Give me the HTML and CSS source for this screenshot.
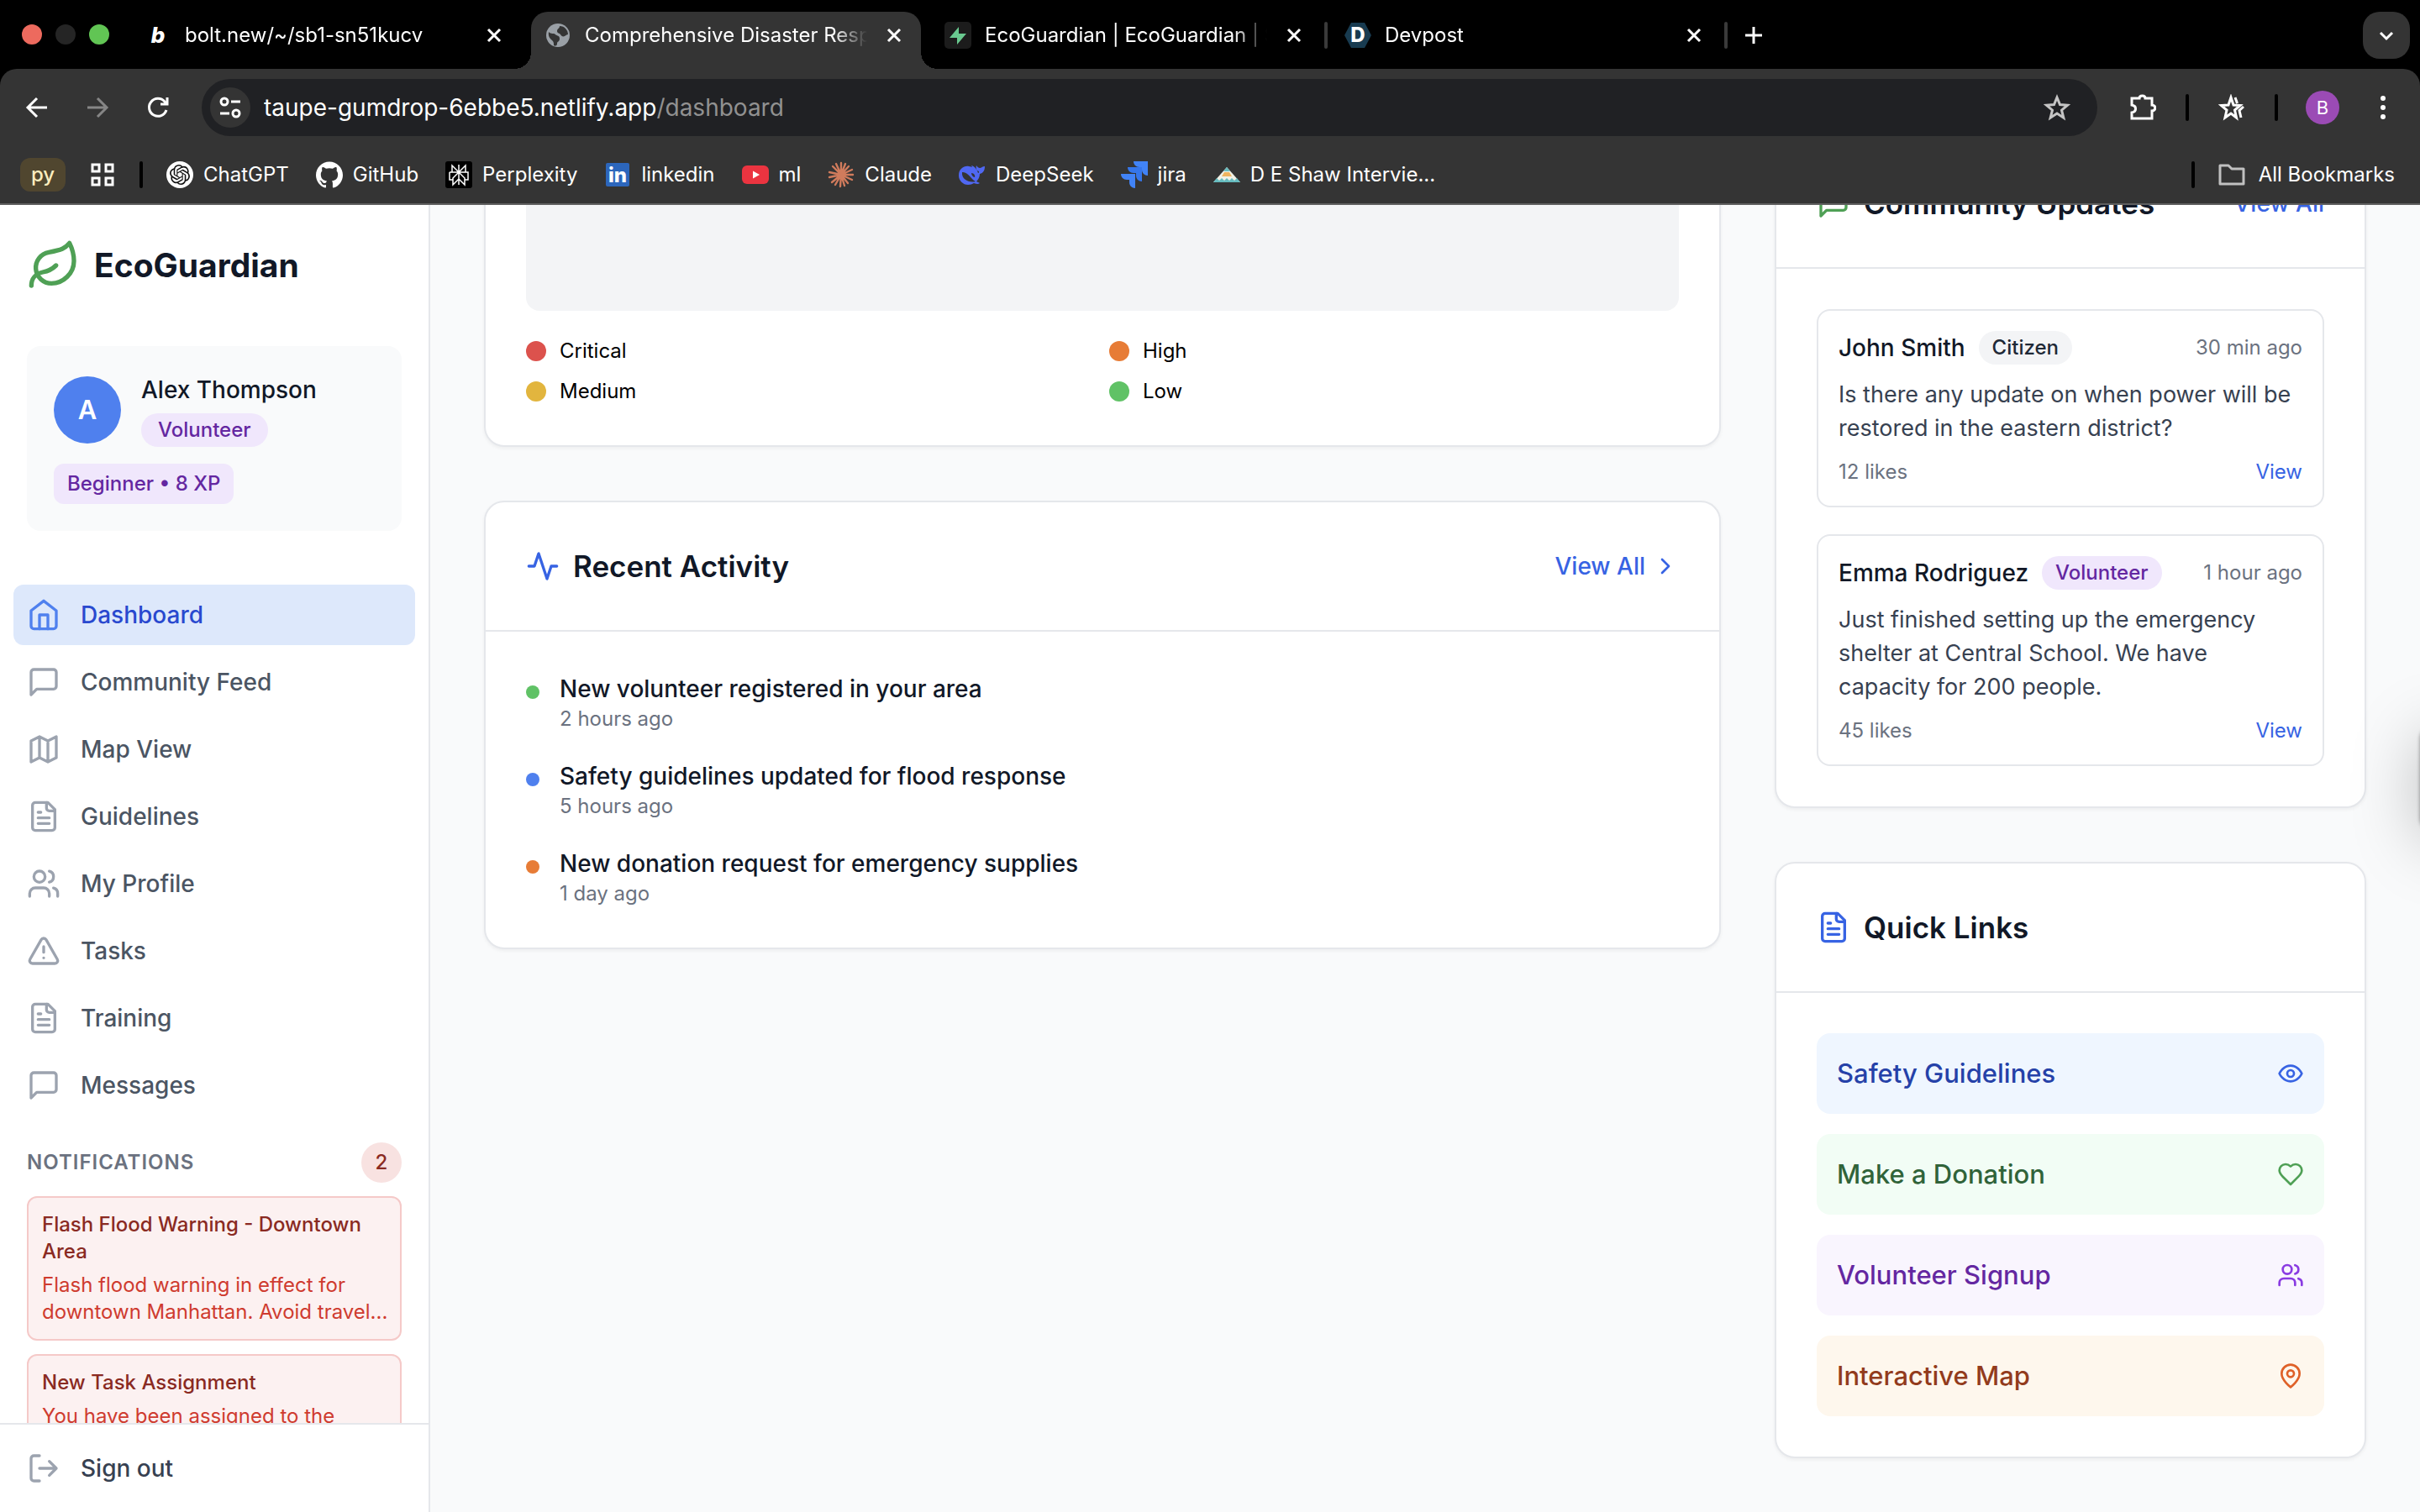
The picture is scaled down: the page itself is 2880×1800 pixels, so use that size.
FILE: index.html
```html
<!DOCTYPE html>
<html lang="en">
<head>
    <meta charset="UTF-8">
    <meta name="viewport" content="width=device-width, initial-scale=1.0">
    <title>Comprehensive Disaster Response</title>
    <link rel="stylesheet" href="styles.css">
</head>
<body>

    <!-- Shared icons -->
    <svg class="sprite" aria-hidden="true">
        <symbol id="leaf" viewBox="0 0 24 24"><path d="M11 20A7 7 0 0 1 9.8 6.1C15.5 5 17 4.48 19 2c1 2 2 4.18 2 8 0 5.5-4.78 10-10 10Z"/><path d="M2 21c0-3 1.85-5.36 5.08-6C9.5 14.52 12 13 13 12"/></symbol>
        <symbol id="home" viewBox="0 0 24 24"><path d="m3 9 9-7 9 7v11a2 2 0 0 1-2 2H5a2 2 0 0 1-2-2z"/><path d="M9 22V12h6v10"/></symbol>
        <symbol id="message" viewBox="0 0 24 24"><path d="M21 15a2 2 0 0 1-2 2H7l-4 4V5a2 2 0 0 1 2-2h14a2 2 0 0 1 2 2z"/></symbol>
        <symbol id="map" viewBox="0 0 24 24"><path d="m3 6 6-3 6 3 6-3v15l-6 3-6-3-6 3zM9 3v15M15 6v15"/></symbol>
        <symbol id="file" viewBox="0 0 24 24"><path d="M15 2H6a2 2 0 0 0-2 2v16a2 2 0 0 0 2 2h12a2 2 0 0 0 2-2V7Z"/><path d="M14 2v4a2 2 0 0 0 2 2h4M10 9H8M16 13H8M16 17H8"/></symbol>
        <symbol id="users" viewBox="0 0 24 24"><path d="M16 21v-2a4 4 0 0 0-4-4H6a4 4 0 0 0-4 4v2"/><circle cx="9" cy="7" r="4"/><path d="M22 21v-2a4 4 0 0 0-3-3.87M16 3.13a4 4 0 0 1 0 7.75"/></symbol>
        <symbol id="alert" viewBox="0 0 24 24"><path d="m21.73 18-8-14a2 2 0 0 0-3.48 0l-8 14A2 2 0 0 0 4 21h16a2 2 0 0 0 1.73-3ZM12 9v4M12 17h.01"/></symbol>
        <symbol id="logout" viewBox="0 0 24 24"><path d="M9 21H5a2 2 0 0 1-2-2V5a2 2 0 0 1 2-2h4M16 17l5-5-5-5M21 12H9"/></symbol>
        <symbol id="activity" viewBox="0 0 24 24"><path d="M22 12h-4l-3 9L9 3l-3 9H2"/></symbol>
        <symbol id="chevron" viewBox="0 0 24 24"><path d="m9 18 6-6-6-6"/></symbol>
        <symbol id="eye" viewBox="0 0 24 24"><path d="M2 12s3-7 10-7 10 7 10 7-3 7-10 7-10-7-10-7Z"/><circle cx="12" cy="12" r="3"/></symbol>
        <symbol id="heart" viewBox="0 0 24 24"><path d="M19 14c1.49-1.46 3-3.21 3-5.5A5.5 5.5 0 0 0 16.5 3c-1.76 0-3 .5-4.5 2-1.5-1.5-2.74-2-4.5-2A5.5 5.5 0 0 0 2 8.5c0 2.3 1.5 4.05 3 5.5l7 7Z"/></symbol>
        <symbol id="pin" viewBox="0 0 24 24"><path d="M20 10c0 6-8 12-8 12s-8-6-8-12a8 8 0 0 1 16 0Z"/><circle cx="12" cy="10" r="3"/></symbol>
        <symbol id="close" viewBox="0 0 32 32"><path d="M9 9l14 14M23 9L9 23"/></symbol>
    </svg>

    <header class="browser">
        <div class="tab-strip">
            <div class="window-buttons">
                <span class="light red"></span>
                <span class="light dark"></span>
                <span class="light green"></span>
            </div>
            <div class="tab">
                <span class="favicon bolt">b</span>
                <span class="tab-title">bolt.new/~/sb1-sn51kucv</span>
                <button class="tab-close" aria-label="Close tab"><svg><use href="#close"/></svg></button>
            </div>
            <div class="tab active">
                <svg class="favicon" viewBox="0 0 32 32"><circle cx="16" cy="16" r="14" fill="#9aa0a6"/><path d="M5 12c3 3 6 1 8 3s5 1 5 5-3 3-3 6-3 3-4 2c0-3 0-4-2-6s-5-4-4-10zM18 5c0 3-3 3-3 6s3 2 4 4 3 3 5 2 2-2 4-2C28 10 24 5 18 5z" fill="#343434"/></svg>
                <span class="tab-title">Comprehensive Disaster Resp</span>
                <button class="tab-close" aria-label="Close tab"><svg><use href="#close"/></svg></button>
            </div>
            <div class="tab divided">
                <svg class="favicon" viewBox="0 0 32 32"><rect width="32" height="32" rx="5" fill="#1c1c1c"/><path d="M17 6v8h9L15 27v-8H6z" fill="#69c98f"/></svg>
                <span class="tab-title">EcoGuardian | EcoGuardian | S</span>
                <button class="tab-close" aria-label="Close tab"><svg><use href="#close"/></svg></button>
            </div>
            <div class="tab divided">
                <svg class="favicon" viewBox="0 0 32 32"><path d="M8 1h16l8 15-8 15H8L0 16z" fill="#183b50"/><text x="16" y="24" text-anchor="middle" class="devpost">D</text></svg>
                <span class="tab-title">Devpost</span>
                <button class="tab-close" aria-label="Close tab"><svg><use href="#close"/></svg></button>
            </div>
            <button class="new-tab" aria-label="New tab"><svg viewBox="0 0 32 32"><path d="M16 6v20M6 16h20"/></svg></button>
            <button class="tab-search" aria-label="Search tabs"><svg viewBox="0 0 32 32"><path d="M9 13l7 7 7-7"/></svg></button>
        </div>

        <div class="toolbar">
            <button class="tool" aria-label="Back"><svg viewBox="0 0 32 32"><path d="M28 16H6M16 5L5 16l11 11"/></svg></button>
            <button class="tool dim" aria-label="Forward"><svg viewBox="0 0 32 32"><path d="M4 16h22M16 5l11 11-11 11"/></svg></button>
            <button class="tool" aria-label="Reload"><svg viewBox="0 0 32 32"><path d="M26 19a10.500 10.500 0 1 1-2-10l3 3M27 4v8h-8"/></svg></button>
            <div class="omnibox">
                <button class="site-info" aria-label="Site information"><svg viewBox="0 0 32 32"><circle cx="9" cy="9" r="4"/><path d="M17 9h11M4 23h11"/><circle cx="23" cy="23" r="4"/></svg></button>
                <input class="url" type="text" aria-label="Address" value="taupe-gumdrop-6ebbe5.netlify.app"><span class="url-path">/dashboard</span>
                <button class="bookmark-star" aria-label="Bookmark this page"><svg viewBox="0 0 32 32"><path d="M16 4l3.500 8.500 9 .7-7 6 2.300 9L16 23l-7.800 5.200 2.300-9-7-6 9-.7z"/></svg></button>
            </div>
            <button class="tool" aria-label="Extensions"><svg viewBox="0 0 32 32"><path d="M5 5h7c0-4 7-4 7 0h8v8c5 0 5 7 0 7v9H3v-7c6-1 6-8 0-9V5z"/></svg></button>
            <span class="bar-divider"></span>
            <button class="tool" aria-label="Favourites"><svg viewBox="0 0 32 32"><path d="M15 4l3 9 8 .5-6.500 5.500 2 9-6.500-5-7 5 2-9-6.500-5.500 8.500-.5zM20 4l2.500 7M30 15l-5 4.500 2 8.500"/></svg></button>
            <span class="bar-divider"></span>
            <button class="account" aria-label="Account">B</button>
            <button class="tool menu" aria-label="Menu"><svg viewBox="0 0 32 32"><circle cx="16" cy="5" r="3"/><circle cx="16" cy="16" r="3"/><circle cx="16" cy="27" r="3"/></svg></button>
        </div>

        <nav class="bookmarks" aria-label="Bookmarks">
            <a class="group-chip" href="#">py</a>
            <button class="apps" aria-label="Apps"><svg viewBox="0 0 28 28"><path d="M2 2h8v8H2zM18 2h8v8h-8zM2 18h8v8H2zM18 18h8v8h-8z"/></svg></button>
            <span class="bar-divider"></span>
            <a class="bookmark" href="#"><svg viewBox="0 0 32 32"><circle cx="16" cy="16" r="16" fill="#fff"/><path transform="translate(4 4)" fill="#111" d="M22.2819 9.8211a5.9847 5.9847 0 0 0-.5157-4.9108 6.0462 6.0462 0 0 0-6.5098-2.9A6.0651 6.0651 0 0 0 4.9807 4.1818a5.9847 5.9847 0 0 0-3.9977 2.9 6.0462 6.0462 0 0 0 .7427 7.0966 5.98 5.98 0 0 0 .511 4.9107 6.051 6.051 0 0 0 6.5146 2.9001A5.9847 5.9847 0 0 0 13.2599 24a6.0557 6.0557 0 0 0 5.7718-4.2058 5.9894 5.9894 0 0 0 3.9977-2.9001 6.0557 6.0557 0 0 0-.7475-7.0729zm-9.022 12.6081a4.4755 4.4755 0 0 1-2.8764-1.0408l.1419-.0804 4.7783-2.7582a.7948.7948 0 0 0 .3927-.6813v-6.7369l2.02 1.1686a.071.071 0 0 1 .038.052v5.5826a4.504 4.504 0 0 1-4.4945 4.4944zm-9.6607-4.1254a4.4708 4.4708 0 0 1-.5346-3.0137l.142.0852 4.783 2.7582a.7712.7712 0 0 0 .7806 0l5.8428-3.3685v2.3324a.0804.0804 0 0 1-.0332.0615L9.74 19.9502a4.4992 4.4992 0 0 1-6.1408-1.6464zM2.3408 7.8956a4.485 4.485 0 0 1 2.3655-1.9728V11.6a.7664.7664 0 0 0 .3879.6765l5.8144 3.3543-2.0201 1.1685a.0757.0757 0 0 1-.071 0l-4.8303-2.7865A4.504 4.504 0 0 1 2.3408 7.872zm16.5963 3.8558L13.1038 8.364 15.1192 7.2a.0757.0757 0 0 1 .071 0l4.8303 2.7913a4.4944 4.4944 0 0 1-.6765 8.1042v-5.6772a.79.79 0 0 0-.407-.667zm2.0107-3.0231l-.142-.0852-4.7735-2.7818a.7759.7759 0 0 0-.7854 0L9.409 9.2297V6.8974a.0662.0662 0 0 1 .0284-.0615l4.8303-2.7866a4.4992 4.4992 0 0 1 6.6802 4.66zM8.3065 12.863l-2.02-1.1638a.0804.0804 0 0 1-.038-.0567V6.0742a4.4992 4.4992 0 0 1 7.3757-3.4537l-.142.0805L8.704 5.459a.7948.7948 0 0 0-.3927.6813zm1.0976-2.3654l2.602-1.4998 2.6069 1.4998v2.9994l-2.5974 1.4997-2.6067-1.4997Z"/></svg>ChatGPT</a>
            <a class="bookmark" href="#"><svg viewBox="0 0 24 24"><path fill="#fff" d="M12 .297c-6.63 0-12 5.373-12 12 0 5.303 3.438 9.8 8.205 11.385.6.113.82-.258.82-.577 0-.285-.01-1.04-.015-2.04-3.338.724-4.042-1.61-4.042-1.61C4.422 18.07 3.633 17.7 3.633 17.7c-1.087-.744.084-.729.084-.729 1.205.084 1.838 1.236 1.838 1.236 1.07 1.835 2.809 1.305 3.495.998.108-.776.417-1.305.76-1.605-2.665-.3-5.466-1.332-5.466-5.93 0-1.31.465-2.38 1.235-3.22-.135-.303-.54-1.523.105-3.176 0 0 1.005-.322 3.3 1.23.96-.267 1.98-.399 3-.405 1.02.006 2.04.138 3 .405 2.28-1.552 3.285-1.23 3.285-1.23.645 1.653.24 2.873.12 3.176.765.84 1.23 1.91 1.23 3.22 0 4.61-2.805 5.625-5.475 5.92.42.36.81 1.096.81 2.22 0 1.606-.015 2.896-.015 3.286 0 .315.21.69.825.57C20.565 22.092 24 17.592 24 12.297c0-6.627-5.373-12-12-12"/></svg>GitHub</a>
            <a class="bookmark" href="#"><svg viewBox="0 0 32 32"><rect width="32" height="32" rx="3" fill="#000"/><path d="M16 4v24M8 5l8 8 8-8v8H8zM5 13h22v9h-4M5 13v9h4M16 13l-7 7v8l7-7 7 7v-8z" fill="none" stroke="#fff" stroke-width="1.500"/></svg>Perplexity</a>
            <a class="bookmark" href="#"><svg viewBox="0 0 32 32"><rect x="2" y="2" width="28" height="28" rx="2" fill="#2c66bc"/><text x="16" y="25" text-anchor="middle" class="linkedin">in</text></svg>linkedin</a>
            <a class="bookmark" href="#"><svg viewBox="0 0 32 32"><rect y="5" width="32" height="22" rx="6" fill="#eb3440"/><path d="M13 11.500v9l8-4.500z" fill="#fff"/></svg>ml</a>
            <a class="bookmark" href="#"><svg viewBox="0 0 32 32"><path d="M16 16V2M16 16l5-13M16 16l9-10M16 16l13-6M16 16h14M16 16l13 6M16 16l8 10M16 16l4 13M16 16l-1 14M16 16L9 28M16 16L5 25M16 16l-14 3M16 16L2 13M16 16L6 6M16 16L10 3" stroke="#d07b5c" stroke-width="2.400" stroke-linecap="round"/></svg>Claude</a>
            <a class="bookmark" href="#"><svg viewBox="0 0 32 32"><path d="M0 17C0 9 6 5 12 6c2 0 3 1 4 1l-1-2c4 1 7 5 8 9 1 0 1-1 1-2-3-1-4-4-3-7 1 2 3 3 4 3 2 0 3-2 6-2 0 5-2 8-6 9 0 4-2 7-4 9 1 1 3 1 4 2-3 2-6 0-7 0-2 1-4 2-7 2C5 28 0 23 0 17z" fill="#5068f2"/><path d="M4 13c7-1 11 9 16 11-7 2-17-2-16-11zM15 14c3 0 5 3 4 5-2 0-4-3-4-5z" fill="#343434"/></svg>DeepSeek</a>
            <a class="bookmark" href="#"><svg viewBox="0 0 32 32"><path d="M15 0h17v17c-4 0-7-3-7-7V7h-3c-4 0-7-3-7-7z" fill="#4183f6"/><path d="M8 7h17v17c-4 0-7-3-7-7v-3h-3c-4 0-7-3-7-7z" fill="#3576ea"/><path d="M0 15h17v17c-4 0-7-3-7-7v-3H7c-4 0-7-3-7-7z" fill="#4183f6"/></svg>jira</a>
            <a class="bookmark" href="#"><svg viewBox="0 0 32 32"><path d="M16 7l16 18H0z" fill="#f1f1e6"/><path d="M16 7l4 5h-8z" fill="#67bcc0"/><path d="M0 25l4-5 3 3 3-3 3 3 3-3 3 3 3-3 3 3 3-3 4 5z" fill="#67bcc0"/><path d="M13 13h6l3 5H10z" fill="#efb35e"/></svg>D E Shaw Intervie...</a>
            <span class="bar-divider push"></span>
            <a class="bookmark all" href="#"><svg viewBox="0 0 32 32"><path d="M2 5h10l4 4h14v18H2z" fill="none" stroke="#c0c0c0" stroke-width="3" stroke-linejoin="round"/></svg>All Bookmarks</a>
        </nav>
    </header>

    <div class="page">
        <aside class="sidebar">
            <div class="sidebar-scroll">
                <div class="brand">
                    <svg class="icon brand-icon"><use href="#leaf"/></svg>
                    <span>EcoGuardian</span>
                </div>

                <div class="profile">
                    <div class="profile-row">
                        <span class="avatar">A</span>
                        <div>
                            <p class="profile-name">Alex Thompson</p>
                            <span class="pill purple">Volunteer</span>
                        </div>
                    </div>
                    <span class="level">Beginner • 8 XP</span>
                </div>

                <nav class="menu-list" aria-label="Main">
                    <a class="menu-item current" href="#"><svg class="icon"><use href="#home"/></svg>Dashboard</a>
                    <a class="menu-item" href="#"><svg class="icon"><use href="#message"/></svg>Community Feed</a>
                    <a class="menu-item" href="#"><svg class="icon"><use href="#map"/></svg>Map View</a>
                    <a class="menu-item" href="#"><svg class="icon"><use href="#file"/></svg>Guidelines</a>
                    <a class="menu-item" href="#"><svg class="icon"><use href="#users"/></svg>My Profile</a>
                    <a class="menu-item" href="#"><svg class="icon"><use href="#alert"/></svg>Tasks</a>
                    <a class="menu-item" href="#"><svg class="icon"><use href="#file"/></svg>Training</a>
                    <a class="menu-item" href="#"><svg class="icon"><use href="#message"/></svg>Messages</a>
                </nav>

                <section class="notifications">
                    <div class="notifications-head">
                        <h3>NOTIFICATIONS</h3>
                        <span class="count">2</span>
                    </div>
                    <article class="notice">
                        <h4>Flash Flood Warning - Downtown Area</h4>
                        <p>Flash flood warning in effect for downtown Manhattan. Avoid travel...</p>
                    </article>
                    <article class="notice">
                        <h4>New Task Assignment</h4>
                        <p>You have been assigned to the</p>
                    </article>
                </section>
            </div>

            <div class="sidebar-footer">
                <button class="sign-out"><svg class="icon"><use href="#logout"/></svg>Sign out</button>
            </div>
        </aside>

        <main class="content">
            <div class="column">
                <section class="card">
                    <div class="card-body">
                        <div class="map-area"></div>
                        <ul class="legend">
                            <li><span class="dot red"></span>Critical</li>
                            <li><span class="dot orange"></span>High</li>
                            <li><span class="dot yellow"></span>Medium</li>
                            <li><span class="dot green"></span>Low</li>
                        </ul>
                    </div>
                </section>

                <section class="card">
                    <div class="card-head">
                        <svg class="icon blue"><use href="#activity"/></svg>
                        <h2>Recent Activity</h2>
                        <a class="view-all" href="#">View All<svg class="icon small"><use href="#chevron"/></svg></a>
                    </div>
                    <ul class="card-body activities">
                        <li>
                            <span class="dot small green"></span>
                            <div><p>New volunteer registered in your area</p><time>2 hours ago</time></div>
                        </li>
                        <li>
                            <span class="dot small blue"></span>
                            <div><p>Safety guidelines updated for flood response</p><time>5 hours ago</time></div>
                        </li>
                        <li>
                            <span class="dot small orange"></span>
                            <div><p>New donation request for emergency supplies</p><time>1 day ago</time></div>
                        </li>
                    </ul>
                </section>
            </div>

            <div class="column">
                <section class="card">
                    <div class="card-head">
                        <svg class="icon green"><use href="#message"/></svg>
                        <h2>Community Updates</h2>
                        <a class="view-all" href="#">View All</a>
                    </div>
                    <div class="card-body posts">
                        <article class="post">
                            <div class="post-head">
                                <h3>John Smith</h3>
                                <span class="pill gray">Citizen</span>
                                <time>30 min ago</time>
                            </div>
                            <p>Is there any update on when power will be restored in the eastern district?</p>
                            <div class="post-foot"><span>12 likes</span><a href="#">View</a></div>
                        </article>
                        <article class="post">
                            <div class="post-head">
                                <h3>Emma Rodriguez</h3>
                                <span class="pill purple">Volunteer</span>
                                <time>1 hour ago</time>
                            </div>
                            <p>Just finished setting up the emergency shelter at Central School. We have capacity for 200 people.</p>
                            <div class="post-foot"><span>45 likes</span><a href="#">View</a></div>
                        </article>
                    </div>
                </section>

                <section class="card">
                    <div class="card-head">
                        <svg class="icon blue"><use href="#file"/></svg>
                        <h2>Quick Links</h2>
                    </div>
                    <div class="card-body links">
                        <a class="quick safety" href="#">Safety Guidelines<svg class="icon small"><use href="#eye"/></svg></a>
                        <a class="quick donate" href="#">Make a Donation<svg class="icon small"><use href="#heart"/></svg></a>
                        <a class="quick signup" href="#">Volunteer Signup<svg class="icon small"><use href="#users"/></svg></a>
                        <a class="quick mapping" href="#">Interactive Map<svg class="icon small"><use href="#pin"/></svg></a>
                    </div>
                </section>
            </div>
        </main>
        <div class="edge-panel"></div>
    </div>

</body>
</html>
```

FILE: styles.css
```css
* {
    box-sizing: border-box;
}

body {
    margin: 0;
    height: 100vh;
    display: flex;
    flex-direction: column;
    overflow: hidden;
    font-family: Inter, "Liberation Sans", sans-serif;
    font-size: 28px;
    line-height: 40px;
    color: #111827;
    background: #f9fafb;
}

h2, h3, h4, p, ul {
    margin: 0;
    padding: 0;
}

ul {
    list-style: none;
}

a {
    text-decoration: none;
}

button {
    padding: 0;
    border: none;
    background: none;
    font: inherit;
    color: inherit;
    cursor: pointer;
}

.sprite {
    display: none;
}

/* Browser window */
.browser {
    flex: none;
    background: #000;
    color: #fff;
    font-size: 24px;
    line-height: 32px;
}

.browser svg {
    flex: none;
    display: block;
    width: 32px;
    height: 32px;
}

.browser button svg {
    fill: none;
    stroke: currentColor;
    stroke-width: 3;
}

.tab-strip {
    display: flex;
    height: 82px;
    padding: 14px 12px 0 26px;
}

.window-buttons {
    display: flex;
    gap: 16px;
    width: 130px;
    padding-top: 15px;
}

.light {
    width: 24px;
    height: 24px;
    border-radius: 50%;
}

.light.red {
    background: #ed6a5e;
}

.light.dark {
    background: #252525;
}

.light.green {
    background: #61c554;
}

.tab {
    position: relative;
    display: flex;
    align-items: center;
    gap: 16px;
    width: 476px;
    padding: 0 28px 12px 16px;
}

.tab.active {
    width: 464px;
    margin-right: 12px;
    padding-right: 16px;
    background: #343434;
    border-radius: 20px 20px 0 0;
}

.tab.active::before,
.tab.active::after {
    content: "";
    position: absolute;
    bottom: 0;
    width: 20px;
    height: 20px;
}

.tab.active::before {
    right: 100%;
    background: radial-gradient(circle at 0 0, #000 20px, #343434 20px);
}

.tab.active::after {
    left: 100%;
    background: radial-gradient(circle at 100% 0, #000 20px, #343434 20px);
}

.tab.divided::after {
    content: "";
    position: absolute;
    right: 4px;
    top: 12px;
    width: 4px;
    height: 32px;
    border-radius: 2px;
    background: #3a3a3a;
}

.favicon {
    flex: none;
    width: 32px;
    height: 32px;
}

.favicon.bolt {
    font-size: 26px;
    font-weight: 800;
    font-style: italic;
    text-align: center;
}

.devpost {
    font-size: 24px;
    font-weight: 800;
    fill: #fff;
}

.linkedin {
    font-size: 24px;
    font-weight: 800;
    fill: #fff;
}

.tab-title {
    flex: 1;
    overflow: hidden;
    white-space: nowrap;
    -webkit-mask-image: linear-gradient(90deg, #000 88%, transparent);
    mask-image: linear-gradient(90deg, #000 88%, transparent);
}

.new-tab {
    width: 54px;
    padding: 0 0 12px 11px;
}

.tab-search {
    display: flex;
    align-items: center;
    justify-content: center;
    width: 56px;
    height: 56px;
    margin-left: auto;
    border-radius: 20px;
    background: #343434;
}

.toolbar {
    display: flex;
    align-items: center;
    gap: 16px;
    height: 92px;
    padding: 0 16px;
    border-radius: 20px 20px 0 0;
    background: #343434;
}

.tool {
    display: flex;
    align-items: center;
    justify-content: center;
    width: 56px;
    height: 56px;
}

.tool.dim {
    color: #868686;
}

.tool.menu svg {
    fill: #fff;
    stroke: none;
}

.omnibox {
    flex: 1;
    display: flex;
    align-items: center;
    height: 68px;
    margin: 0 10px 0 8px;
    padding: 0 32px 0 10px;
    border-radius: 34px;
    background: #202124;
    font-size: 28px;
}

.site-info {
    display: flex;
    align-items: center;
    justify-content: center;
    width: 48px;
    height: 48px;
    margin-right: 16px;
    border-radius: 50%;
    background: #343434;
}

.url {
    field-sizing: content;
    padding: 0;
    border: none;
    outline: none;
    background: none;
    font: inherit;
    color: #fff;
}

.url-path {
    color: #919191;
}

.bookmark-star {
    margin-left: auto;
    color: #c4c4c4;
}

.bar-divider {
    width: 4px;
    height: 32px;
    border-radius: 2px;
    background: #000;
}

.toolbar .bar-divider {
    margin: 0 7px;
}

.account {
    width: 40px;
    height: 40px;
    margin: 0 8px 0 10px;
    border-radius: 50%;
    background: #9b4bb5;
    font-size: 22px;
}

.bookmarks {
    display: flex;
    align-items: center;
    height: 70px;
    padding: 0 30px 0 24px;
    border-bottom: 2px solid #5f5f5f;
    background: #343434;
}

.bookmark {
    display: flex;
    align-items: center;
    gap: 12px;
    margin-left: 32px;
    color: #fff;
}

.bar-divider + .bookmark {
    margin-left: 28px;
}

.bookmark.all {
    gap: 16px;
}

.group-chip {
    min-width: 54px;
    padding: 4px 0;
    border-radius: 12px;
    background: #50462f;
    color: #fbedbe;
    font-weight: 500;
    text-align: center;
}

.bookmarks .apps svg {
    width: 28px;
    height: 28px;
}

.apps {
    margin: 0 30px;
}

.push {
    margin-left: auto;
}

/* Dashboard */
.page {
    position: relative;
    flex: 1;
    display: flex;
    min-height: 0;
    overflow: hidden;
}

.icon {
    flex: none;
    width: 40px;
    height: 40px;
    fill: none;
    stroke: currentColor;
    stroke-width: 2;
    stroke-linecap: round;
    stroke-linejoin: round;
}

.icon.small {
    width: 32px;
    height: 32px;
}

.icon.blue {
    color: #3763e3;
}

.icon.green {
    color: #4fa055;
}

.sidebar {
    flex: none;
    display: flex;
    flex-direction: column;
    width: 512px;
    background: #fff;
    border-right: 2px solid #e5e7eb;
}

.sidebar-scroll {
    flex: 1;
    min-height: 0;
    overflow: hidden;
    padding-top: 40px;
}

.brand {
    display: flex;
    align-items: center;
    gap: 16px;
    padding: 0 32px;
    font-size: 39px;
    font-weight: 700;
}

.brand-icon {
    width: 64px;
    height: 64px;
    color: #4fa055;
}

.profile {
    margin: 64px 32px;
    padding: 32px;
    border-radius: 16px;
    background: #f9fafb;
}

.profile-row {
    display: flex;
    align-items: center;
    gap: 24px;
    margin-bottom: 20px;
}

.profile-name {
    margin-bottom: 8px;
    font-weight: 500;
}

.avatar {
    display: flex;
    align-items: center;
    justify-content: center;
    width: 80px;
    height: 80px;
    border-radius: 50%;
    background: #4f80ee;
    color: #fff;
    font-size: 31px;
    font-weight: 600;
}

.pill {
    display: block;
    width: fit-content;
    padding: 4px 16px;
    border-radius: 20px;
    font-size: 24px;
    font-weight: 500;
    line-height: 32px;
}

.profile .pill {
    padding: 4px 20px;
}

.pill.purple,
.level {
    background: #f0e7fc;
    color: #6427a1;
}

.pill.gray {
    background: #f3f4f6;
    color: #1f2937;
}

.level {
    display: block;
    width: fit-content;
    padding: 8px 16px;
    border-radius: 12px;
    font-size: 24px;
    font-weight: 500;
    line-height: 32px;
}

.menu-list {
    display: flex;
    flex-direction: column;
    gap: 8px;
    padding: 0 16px;
}

.menu-item,
.sign-out {
    display: flex;
    align-items: center;
    gap: 24px;
    padding: 16px;
    border-radius: 12px;
    font-weight: 500;
    color: #4b5563;
}

.menu-item .icon,
.sign-out .icon {
    color: #9ca3af;
}

.menu-item.current {
    background: #dde8fb;
    color: #2949cf;
}

.menu-item.current .icon {
    color: #4f80ee;
}

.notifications {
    display: flex;
    flex-direction: column;
    gap: 16px;
    padding: 32px;
    font-size: 24px;
    line-height: 32px;
}

.notifications-head {
    display: flex;
    align-items: center;
    justify-content: space-between;
}

.notifications-head h3 {
    font-size: 24px;
    font-weight: 600;
    letter-spacing: 1px;
    color: #6b7280;
}

.count {
    width: 48px;
    border-radius: 50%;
    background: #f8e2e1;
    color: #8a2a22;
    font-weight: 500;
    line-height: 48px;
    text-align: center;
}

.notice {
    padding: 16px 8px 16px 16px;
    border: 2px solid #f5c9c8;
    border-radius: 12px;
    background: #fcf1f1;
    color: #cf3b2f;
}

.notice h4 {
    margin-bottom: 8px;
    font-size: 24px;
    font-weight: 500;
    color: #8a2a22;
}

.sidebar-footer {
    padding: 16px;
    border-top: 2px solid #e5e7eb;
}

.sign-out {
    color: #374151;
}

.content {
    flex: 1;
    display: grid;
    grid-template-columns: minmax(0, 1472fr) minmax(0, 704fr);
    align-items: start;
    gap: 64px;
    /* page is scrolled part of the way down */
    margin-top: -80px;
    padding: 0 64px;
}

.column {
    display: flex;
    flex-direction: column;
    gap: 64px;
}

.card {
    border: 2px solid #e5e7eb;
    border-radius: 24px;
    background: #fff;
    box-shadow: 0 2px 4px rgba(0, 0, 0, 0.05);
}

.card-head {
    display: flex;
    align-items: center;
    gap: 16px;
    height: 154px;
    padding: 0 48px;
    border-bottom: 2px solid #e5e7eb;
}

.card-head h2 {
    font-size: 35px;
    font-weight: 600;
}

.card-body {
    padding: 48px;
}

.view-all {
    display: flex;
    align-items: center;
    gap: 8px;
    margin-left: auto;
    font-weight: 500;
    color: #3763e3;
}

.map-area {
    height: 156px;
    border-radius: 16px;
    background: #f3f4f6;
}

.legend {
    display: grid;
    grid-template-columns: 1fr 1fr;
    gap: 16px;
    margin-top: 32px;
    font-size: 24px;
    line-height: 32px;
    color: #000;
}

.legend li {
    display: flex;
    align-items: center;
    gap: 16px;
}

.dot {
    flex: none;
    width: 24px;
    height: 24px;
    border-radius: 50%;
}

.dot.small {
    width: 16px;
    height: 16px;
    margin-top: 16px;
}

.dot.red {
    background: #dc524d;
}

.dot.orange {
    background: #e77c36;
}

.dot.yellow {
    background: #e2b53e;
}

.dot.green {
    background: #60c266;
}

.dot.blue {
    background: #4f80ee;
}

.activities {
    display: flex;
    flex-direction: column;
    gap: 32px;
}

.activities li {
    display: flex;
    gap: 24px;
}

.activities p {
    font-weight: 500;
}

time,
.post-foot {
    font-size: 24px;
    line-height: 32px;
    color: #6b7280;
}

.activities time {
    display: block;
}

.posts {
    display: flex;
    flex-direction: column;
    gap: 32px;
}

.post {
    padding: 24px;
    border: 2px solid #e5e7eb;
    border-radius: 16px;
    color: #374151;
}

.post-head {
    display: flex;
    align-items: center;
    gap: 16px;
}

.post-head h3 {
    font-size: 28px;
    font-weight: 500;
    color: #111827;
}

.post-head time {
    margin-left: auto;
}

.post p {
    margin: 16px 0;
    font-size: 27px;
}

.post-foot {
    display: flex;
    justify-content: space-between;
}

.post-foot a {
    color: #3763e3;
}

.links {
    display: flex;
    flex-direction: column;
    gap: 24px;
}

.quick {
    display: flex;
    align-items: center;
    justify-content: space-between;
    height: 96px;
    padding: 0 24px;
    border-radius: 16px;
    font-size: 31px;
    font-weight: 500;
}

.quick.safety {
    background: #eff6ff;
    color: #2541a8;
}

.quick.safety .icon {
    color: #3763e3;
}

.quick.donate {
    background: #f2fdf5;
    color: #306339;
}

.quick.donate .icon {
    color: #4fa055;
}

.quick.signup {
    background: #f9f5fe;
    color: #6427a1;
}

.quick.signup .icon {
    color: #8a3be2;
}

.quick.mapping {
    background: #fef7ed;
    color: #923b1c;
}

.quick.mapping .icon {
    color: #df6128;
}

/* shadow of a panel parked past the right edge */
.edge-panel {
    position: absolute;
    top: 620px;
    left: 100%;
    width: 80px;
    height: 126px;
    border-radius: 16px;
    box-shadow: 0 0 4px rgba(0, 0, 0, 0.4), 0 12px 80px rgba(0, 0, 0, 0.25);
}
```
